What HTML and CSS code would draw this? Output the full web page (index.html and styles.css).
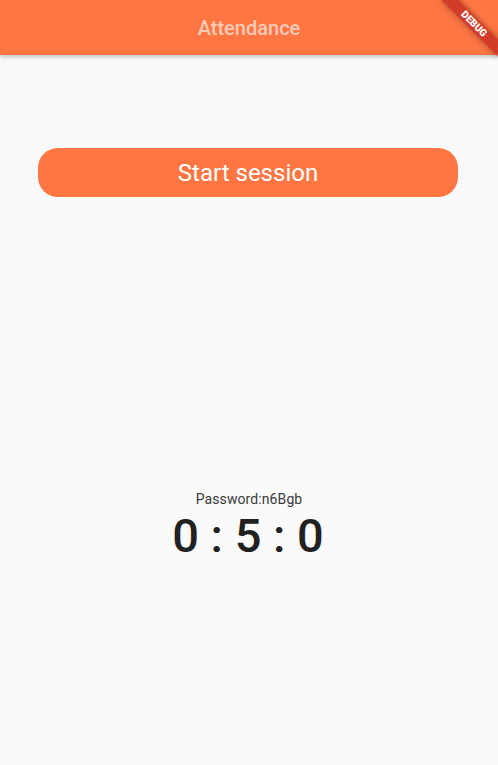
FILE: index.html
```html
<!DOCTYPE html>
<html>
<head>
<meta charset="utf-8">
<link rel="stylesheet" href="styles.css">
</head>
<body>
<header class="appbar"><h1 class="title">Attendance</h1></header>
<main class="content">
  <div class="button-wrap"><button class="start-btn">Start session</button></div>
  <section class="timer">
    <div class="password">Password:n6Bgb</div>
    <div class="clock">0 : 5 : 0</div>
  </section>
</main>
<div class="debug-banner">DEBUG</div>
</body>
</html>
```
FILE: styles.css
```css
html, body {
  margin: 0;
  padding: 0;
  width: 498px;
  height: 765px;
  overflow: hidden;
  background: #fafafa;
  font-family: Roboto, "Noto Sans", sans-serif;
}
.appbar {
  height: 55px;
  background: #ff7643;
  box-shadow: 0 2px 4px rgba(0,0,0,0.22);
  display: flex;
  align-items: center;
  justify-content: center;
  position: relative;
  z-index: 1;
}
.title {
  margin: 0;
  font-size: 20px;
  font-weight: 500;
  color: #ffcbb6;
  padding-top: 1px;
}
.content {
  display: flex;
  flex-direction: column;
}
.button-wrap {
  padding: 93px 40px 0 38px;
}
.start-btn {
  width: 100%;
  height: 49px;
  border: none;
  border-radius: 20px;
  background: #ff7643;
  color: #ffffff;
  font-family: Roboto, sans-serif;
  font-size: 24px;
  font-weight: 400;
  padding: 0;
}
.timer {
  margin-top: 294px;
  display: flex;
  flex-direction: column;
  align-items: center;
}
.password {
  font-size: 14px;
  color: #3a3a3a;
  line-height: 17px;
  letter-spacing: 0.1px;
}
.clock {
  font-size: 47px;
  font-weight: 500;
  color: #212121;
  line-height: 56px;
  margin-top: 0;
  padding-right: 2px;
}
.debug-banner {
  position: absolute;
  left: 434px;
  top: 18px;
  width: 80px;
  height: 12px;
  background: rgba(183, 28, 28, 0.63);
  box-shadow: 0 0 6px rgba(0,0,0,0.4);
  transform: rotate(45deg);
  color: #fff;
  font-size: 10px;
  font-weight: 900;
  line-height: 12px;
  text-align: center;
  z-index: 2;
}
```
